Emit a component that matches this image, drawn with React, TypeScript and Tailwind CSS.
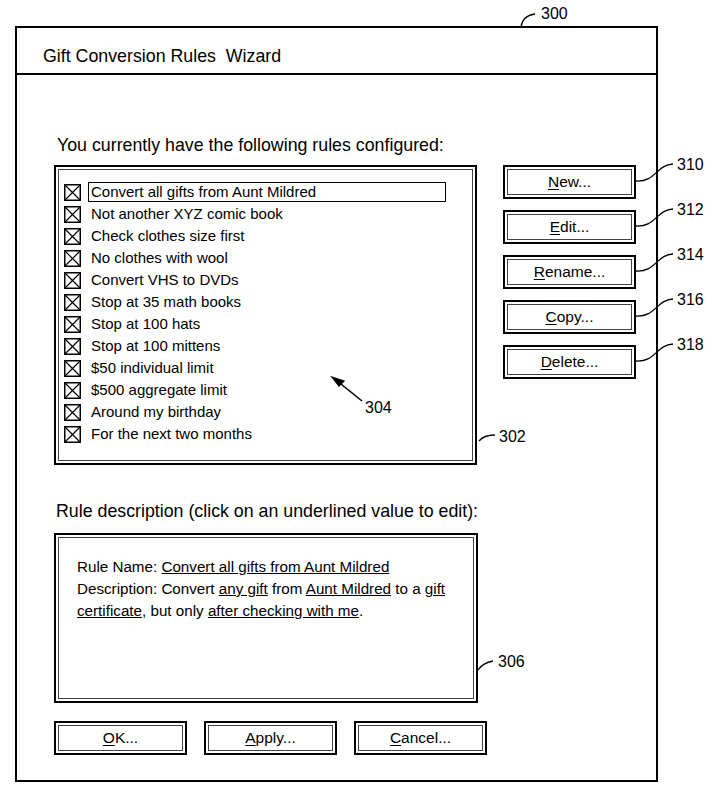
import React from "react";

const rules = [
  "Convert all gifts from Aunt Mildred",
  "Not another XYZ comic book",
  "Check clothes size first",
  "No clothes with wool",
  "Convert VHS to DVDs",
  "Stop at 35 math books",
  "Stop at 100 hats",
  "Stop at 100 mittens",
  "$50 individual limit",
  "$500 aggregate limit",
  "Around my birthday",
  "For the next two months",
];

const sideButtons = [
  { key: "N", rest: "ew...", ref: "310" },
  { key: "E", rest: "dit...", ref: "312" },
  { key: "R", rest: "ename...", ref: "314" },
  { key: "C", rest: "opy...", ref: "316" },
  { key: "D", rest: "elete...", ref: "318" },
];

const CheckBox = () => (
  <svg width="17" height="17" viewBox="0 0 17 17" className="shrink-0">
    <rect x="0.75" y="0.75" width="15.5" height="15.5" fill="none" stroke="black" strokeWidth="1.5" />
    <path d="M1 1 L16 16 M16 1 L1 16" stroke="black" strokeWidth="1.2" />
  </svg>
);

const Button = ({ k, rest, className = "" }: { k: string; rest: string; className?: string }) => (
  <div className={`w-[133px] h-[34px] border-2 border-black p-[2px] ${className}`}>
    <div className="h-full border border-[#444] flex items-center justify-center text-[15.5px] leading-[18px]">
      <span>
        <span className="underline underline-offset-2">{k}</span>
        {rest}
      </span>
    </div>
  </div>
);

const Label = ({ text, x, y }: { text: string; x: number; y: number }) => (
  <span className="absolute text-[16px] leading-[18px]" style={{ left: x, top: y }}>
    {text}
  </span>
);

export default function App() {
  return (
    <div className="relative w-[714px] h-[793px] bg-white text-black font-['Liberation_Sans',Arial,sans-serif] pt-[26px] pl-[15px]">
      <div className="w-[643px] h-[756px] border-2 border-black flex flex-col">
        <div className="h-[47px] border-b-2 border-black pl-[26px] pt-[18px]">
          <p className="text-[17.8px] leading-[20px] whitespace-pre">Gift Conversion Rules  Wizard</p>
        </div>

        <div className="flex flex-col pl-[37px] pt-[60px]">
          <p className="ml-[3px] text-[17.8px] leading-[20px]">You currently have the following rules configured:</p>

          <div className="mt-[10px] flex gap-[26px]">
            <div className="w-[423px] h-[300px] border-2 border-black p-[2px]">
              <div className="h-full border border-[#444] pl-[5px] pt-[11px]">
                {rules.map((rule, i) => (
                  <div key={rule} className="flex items-center h-[22px]">
                    <CheckBox />
                    <span
                      className={`ml-[7px] px-[2px] text-[15px] leading-[18px] border ${
                        i === 0 ? "w-[358px] border-black" : "border-transparent"
                      }`}
                    >
                      {rule}
                    </span>
                  </div>
                ))}
              </div>
            </div>

            <div className="flex flex-col gap-[11px]">
              {sideButtons.map((b) => (
                <Button key={b.ref} k={b.key} rest={b.rest} />
              ))}
            </div>
          </div>

          <p className="mt-[36px] ml-[2px] text-[17.8px] leading-[20px]">
            Rule description (click on an underlined value to edit):
          </p>

          <div className="mt-[12px] w-[424px] h-[170px] border-2 border-black p-[2px]">
            <div className="h-full border border-[#444] pl-[18px] pt-[18px] text-[15.2px] leading-[22px]">
              <p>
                Rule Name: <span className="underline">Convert all gifts from Aunt Mildred</span>
              </p>
              <p>
                Description: Convert <span className="underline">any gift</span> from{" "}
                <span className="underline">Aunt Mildred</span> to a <span className="underline">gift</span>
              </p>
              <p>
                <span className="underline">certificate</span>, but only{" "}
                <span className="underline">after checking with me</span>.
              </p>
            </div>
          </div>

          <div className="mt-[18px] flex gap-[17px]">
            <Button k="O" rest="K..." />
            <Button k="A" rest="pply..." />
            <Button k="C" rest="ancel..." />
          </div>
        </div>
      </div>

      {/* reference numerals and leader lines */}
      <svg className="absolute inset-0 pointer-events-none" width="714" height="793" viewBox="0 0 714 793" fill="none" stroke="black" strokeWidth="1.3">
        <path d="M521 27 C522 20 527 15 535 14" />
        {[181, 226, 271, 316, 361].map((cy) => (
          <path key={cy} d={`M636 ${cy} C656 ${cy + 1} 656 ${cy - 16} 673 ${cy - 17}`} />
        ))}
        <path d="M479 441 C483 436 488 435 495 435" />
        <path d="M478 670 C482 664 487 662 493 661" />
        <path d="M362 401 L336 380" strokeWidth="1.6" />
        <path d="M332 377 L344 381 L339 386 Z" fill="black" />
      </svg>
      <Label text="300" x={541} y={5} />
      {sideButtons.map((b, i) => (
        <Label key={b.ref} text={b.ref} x={677} y={156 + i * 45} />
      ))}
      <Label text="304" x={365} y={399} />
      <Label text="302" x={499} y={428} />
      <Label text="306" x={498} y={653} />
    </div>
  );
}
